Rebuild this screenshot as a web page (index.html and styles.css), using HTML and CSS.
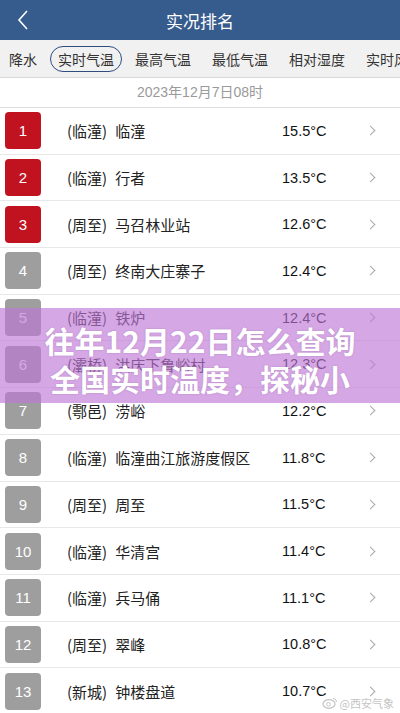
FILE: index.html
```html
<!DOCTYPE html>
<html lang="zh-CN">
<head>
<meta charset="UTF-8">
<meta name="viewport" content="width=device-width, initial-scale=1.0">
<title>实况排名</title>
<link rel="stylesheet" href="styles.css">
</head>
<body>

<div class="page">
    <div class="topbar">
        <span class="back">
            <svg width="12" height="20" viewBox="0 0 12 20"><polyline points="10,1 2,10 10,19" fill="none" stroke="#fff" stroke-width="1.6"/></svg>
        </span>
        <h1>实况排名</h1>
    </div>

    <div class="tabs">
        <span class="tab">降水</span>
        <span class="tab active">实时气温</span>
        <span class="tab">最高气温</span>
        <span class="tab">最低气温</span>
        <span class="tab">相对湿度</span>
        <span class="tab">实时风</span>
    </div>

    <div class="datebar">2023年12月7日08时</div>

    <ul class="ranklist">
        <li class="row"><span class="badge top">1</span><span class="name"><span class="area">(临潼)</span>临潼</span><span class="temp">15.5°C</span><span class="arrow"></span></li>
        <li class="row"><span class="badge top">2</span><span class="name"><span class="area">(临潼)</span>行者</span><span class="temp">13.5°C</span><span class="arrow"></span></li>
        <li class="row"><span class="badge top">3</span><span class="name"><span class="area">(周至)</span>马召林业站</span><span class="temp">12.6°C</span><span class="arrow"></span></li>
        <li class="row"><span class="badge">4</span><span class="name"><span class="area">(周至)</span>终南大庄寨子</span><span class="temp">12.4°C</span><span class="arrow"></span></li>
        <li class="row"><span class="badge">5</span><span class="name"><span class="area">(临潼)</span>铁炉</span><span class="temp">12.4°C</span><span class="arrow"></span></li>
        <li class="row"><span class="badge">6</span><span class="name"><span class="area">(灞桥)</span>洪庆下鲁峪村</span><span class="temp">12.3°C</span><span class="arrow"></span></li>
        <li class="row"><span class="badge">7</span><span class="name"><span class="area">(鄠邑)</span>涝峪</span><span class="temp">12.2°C</span><span class="arrow"></span></li>
        <li class="row"><span class="badge">8</span><span class="name"><span class="area">(临潼)</span>临潼曲江旅游度假区</span><span class="temp">11.8°C</span><span class="arrow"></span></li>
        <li class="row"><span class="badge">9</span><span class="name"><span class="area">(周至)</span>周至</span><span class="temp">11.5°C</span><span class="arrow"></span></li>
        <li class="row"><span class="badge">10</span><span class="name"><span class="area">(临潼)</span>华清宫</span><span class="temp">11.4°C</span><span class="arrow"></span></li>
        <li class="row"><span class="badge">11</span><span class="name"><span class="area">(临潼)</span>兵马俑</span><span class="temp">11.1°C</span><span class="arrow"></span></li>
        <li class="row"><span class="badge">12</span><span class="name"><span class="area">(周至)</span>翠峰</span><span class="temp">10.8°C</span><span class="arrow"></span></li>
        <li class="row"><span class="badge">13</span><span class="name"><span class="area">(新城)</span>钟楼盘道</span><span class="temp">10.7°C</span><span class="arrow"></span></li>
    </ul>

    <div class="banner">
        <p>往年12月22日怎么查询</p>
        <p>全国实时温度，探秘小</p>
    </div>

    <div class="watermark">
        <svg width="16" height="12" viewBox="0 0 16 12"><ellipse cx="7" cy="7" rx="6" ry="4.3" fill="none" stroke="#c4c4c4" stroke-width="1.2"/><circle cx="6.5" cy="7.3" r="1.8" fill="none" stroke="#c4c4c4" stroke-width="1"/><path d="M11 1.5 a3.5 3.5 0 0 1 3.5 3.5" fill="none" stroke="#c4c4c4" stroke-width="1"/></svg>
        <span>@西安气象</span>
    </div>
</div>

</body>
</html>
```

FILE: styles.css
```css
body {
    margin: 0;
    padding: 0;
    background-color: #fff;
    font-family: "Liberation Sans", "Noto Sans CJK SC", sans-serif;
}
.page {
    position: relative;
    width: 400px;
    height: 713px;
    overflow: hidden;
}
.topbar {
    height: 40px;
    background-color: #365b8d;
    display: flex;
    align-items: center;
    justify-content: center;
    position: relative;
}
.topbar h1 {
    margin: 0;
    color: #fff;
    font-size: 17px;
    font-weight: normal;
    font-family: "Noto Sans CJK SC", sans-serif;
}
.back {
    position: absolute;
    left: 17px;
    top: 10px;
}
.tabs {
    height: 37px;
    background-color: #f1f1f1;
    border-bottom: 1px solid #d9d9d9;
    display: flex;
    align-items: center;
    gap: 5px;
    padding-left: 1px;
    white-space: nowrap;
    overflow: hidden;
}
.tab {
    font-family: "Noto Sans CJK SC", sans-serif;
    font-size: 14px;
    color: #333;
    padding: 2px 7px;
    border: 1px solid transparent;
    line-height: 20px;
}
.tab.active {
    border-color: #2e4d7c;
    border-radius: 13px;
}
.datebar {
    height: 29px;
    line-height: 29px;
    text-align: center;
    font-size: 14px;
    color: #9a9a9a;
    border-bottom: 1px solid #dedede;
}
.ranklist {
    list-style: none;
    margin: 0;
    padding: 0;
}
.row {
    height: 46.7px;
    box-sizing: border-box;
    border-bottom: 1px solid #e8e8e8;
    display: flex;
    align-items: center;
    padding-left: 5px;
}
.badge {
    width: 36px;
    height: 37px;
    border-radius: 4px;
    background-color: #9e9e9e;
    color: #fff;
    font-size: 15px;
    display: flex;
    align-items: center;
    justify-content: center;
}
.badge.top {
    background-color: #c1121f;
}
.name {
    flex: 1;
    margin-left: 26px;
    font-size: 15px;
    color: #222;
    font-family: "Noto Sans CJK SC", sans-serif;
}
.area {
    margin-right: 8px;
}
.temp {
    width: 85px;
    font-size: 14.5px;
    color: #111;
}
.arrow {
    width: 6px;
    height: 6px;
    margin-right: 26px;
    border-top: 1.3px solid #a8a8a8;
    border-right: 1.3px solid #a8a8a8;
    transform: rotate(45deg);
}
.banner {
    position: absolute;
    left: 0;
    top: 308px;
    width: 400px;
    height: 95px;
    box-sizing: border-box;
    padding-top: 13px;
    background-color: rgba(190, 118, 212, 0.64);
    text-align: center;
}
.banner p {
    margin: 0;
    font-family: "Noto Sans CJK SC", sans-serif;
    font-weight: bold;
    font-size: 30px;
    line-height: 38px;
    color: #fff;
    text-shadow: 0 0 2px rgba(90, 40, 110, 0.25);
}
.watermark {
    position: absolute;
    right: 6px;
    bottom: 2px;
    display: flex;
    align-items: center;
    gap: 2px;
    font-family: "Noto Sans CJK SC", sans-serif;
    font-size: 11px;
    color: #c4c4c4;
}
```
